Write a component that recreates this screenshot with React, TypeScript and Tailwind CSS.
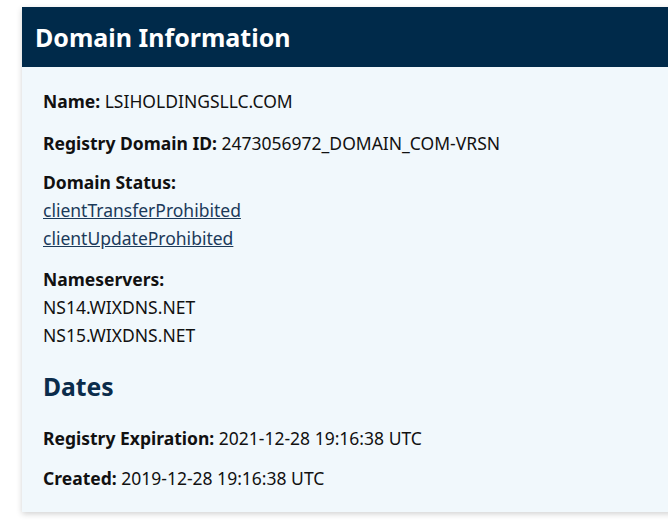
export default function App() {
  return (
    <div className="min-h-screen bg-white pt-[7px] pl-[22px] overflow-hidden" style={{ fontFamily: '"Noto Sans", sans-serif' }}>
      <section className="w-[700px] bg-[#f1f8fc] shadow-[0_2px_6px_rgba(0,0,0,0.18)]">
        <div className="bg-[#002a4a] h-[60px] flex items-center pl-[13px]">
          <h1 className="text-white text-[25px] font-bold leading-none">Domain Information</h1>
        </div>
        <div className="pl-[21px] pt-[20px] pb-[20px] text-[17.5px] leading-[28px] text-[#111111]">
          <p className="mb-[14px]">
            <span className="font-bold">Name:</span> LSIHOLDINGSLLC.COM
          </p>
          <p className="mb-[11px]">
            <span className="font-bold">Registry Domain ID:</span> 2473056972_DOMAIN_COM-VRSN
          </p>
          <div className="mb-[13px]">
            <p className="font-bold">Domain Status:</p>
            <a href="#" className="block underline text-[#1b3a5a]">clientTransferProhibited</a>
            <a href="#" className="block underline text-[#1b3a5a]">clientUpdateProhibited</a>
          </div>
          <div>
            <p className="font-bold">Nameservers:</p>
            <p>NS14.WIXDNS.NET</p>
            <p>NS15.WIXDNS.NET</p>
          </div>
          <h2 className="mt-[22px] mb-[21px] text-[24.7px] leading-[32px] font-bold text-[#0b2c4b]">Dates</h2>
          <p className="mb-[12px]">
            <span className="font-bold">Registry Expiration:</span> 2021-12-28 19:16:38 UTC
          </p>
          <p>
            <span className="font-bold">Created:</span> 2019-12-28 19:16:38 UTC
          </p>
        </div>
      </section>
    </div>
  )
}
